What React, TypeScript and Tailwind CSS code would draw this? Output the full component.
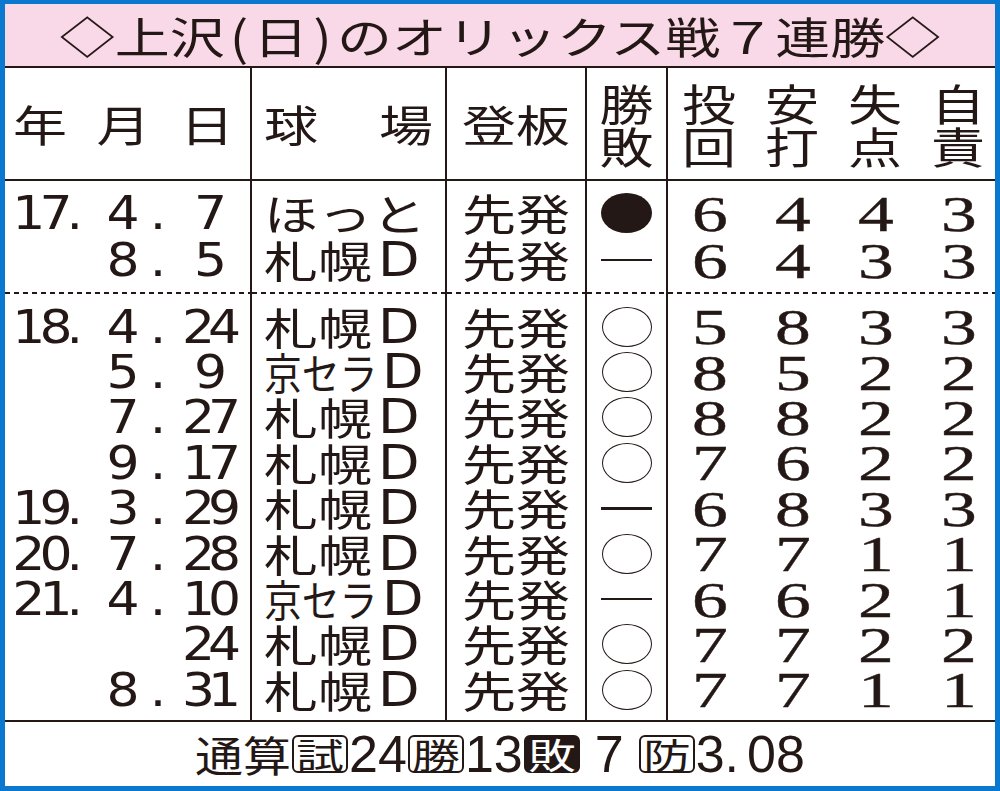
import React from "react";

type Result = "win" | "lose" | "none";
type Game = {
  y?: string;
  m?: string;
  d: string;
  park: string;
  res: Result;
  ip: string;
  h: string;
  r: string;
  er: string;
};

const season17: Game[] = [
  { y: "17.", m: "4", d: "7", park: "ほっと", res: "lose", ip: "6", h: "4", r: "4", er: "3" },
  { m: "8", d: "5", park: "札幌D", res: "none", ip: "6", h: "4", r: "3", er: "3" },
];

const later: Game[] = [
  { y: "18.", m: "4", d: "24", park: "札幌D", res: "win", ip: "5", h: "8", r: "3", er: "3" },
  { m: "5", d: "9", park: "京セラD", res: "win", ip: "8", h: "5", r: "2", er: "2" },
  { m: "7", d: "27", park: "札幌D", res: "win", ip: "8", h: "8", r: "2", er: "2" },
  { m: "9", d: "17", park: "札幌D", res: "win", ip: "7", h: "6", r: "2", er: "2" },
  { y: "19.", m: "3", d: "29", park: "札幌D", res: "none", ip: "6", h: "8", r: "3", er: "3" },
  { y: "20.", m: "7", d: "28", park: "札幌D", res: "win", ip: "7", h: "7", r: "1", er: "1" },
  { y: "21.", m: "4", d: "10", park: "京セラD", res: "none", ip: "6", h: "6", r: "2", er: "1" },
  { d: "24", park: "札幌D", res: "win", ip: "7", h: "7", r: "2", er: "2" },
  { m: "8", d: "31", park: "札幌D", res: "win", ip: "7", h: "7", r: "1", er: "1" },
];

const grid = "grid grid-cols-[245px_195px_140px_81px_329px] grid-rows-[100%]";
const line = "border-l-2 border-[#231815]";
const jp = "font-['Noto_Sans_CJK_JP',sans-serif]";
const sans = "font-['DejaVu_Sans',sans-serif]";
const serif = "font-['Liberation_Serif',serif]";
const footSans = "font-['Liberation_Sans',sans-serif]";

function Blank({ className }: { className: string }) {
  return (
    <div className={`${grid} ${className}`}>
      <div />
      <div className={line} />
      <div className={line} />
      <div className={line} />
      <div className={line} />
    </div>
  );
}

function Dashed() {
  const dash = "h-[2px] w-full bg-[repeating-linear-gradient(90deg,#231815_0_5px,transparent_5px_9px)]";
  return (
    <div className={`${grid} h-[2px]`}>
      <div className={dash} />
      <div className={`${line} ${dash}`} />
      <div className={`${line} ${dash}`} />
      <div className={`${line} ${dash}`} />
      <div className={`${line} ${dash}`} />
    </div>
  );
}

function Mark({ res }: { res: Result }) {
  if (res === "lose") return <div className="h-[40px] w-[51px] rounded-[50%] bg-[#231815]" />;
  if (res === "win") return <div className="h-[40px] w-[50px] rounded-[50%] border-[1.5px] border-[#231815]" />;
  return <div className="h-[2.5px] w-[51px] bg-[#231815]" />;
}

function Park({ name }: { name: string }) {
  const hasD = name.endsWith("D");
  const base = hasD ? name.slice(0, -1) : name;
  const condensed = base === "京セラ";
  return (
    <div className="flex items-center pl-[12px] leading-none">
      {condensed ? (
        <span className="inline-block w-[112px]">
          <span className={`inline-block origin-left scale-x-[0.7] scale-y-[0.8] whitespace-nowrap text-[54px] ${jp}`}>
            {base}
          </span>
        </span>
      ) : (
        <span className={`inline-block scale-y-[0.8] whitespace-nowrap text-[54px] ${jp}`}>{base}</span>
      )}
      {hasD && <span className={`ml-[6px] inline-block scale-y-[0.88] text-[54px] ${sans}`}>D</span>}
    </div>
  );
}

function GameRow({ g, h }: { g: Game; h: string }) {
  const stats = [g.ip, g.h, g.r, g.er];
  return (
    <div className={`${grid} ${h} leading-none`}>
      <div className={`flex items-center text-[52px] ${sans}`}>
        <span className="inline-block w-[72px] scale-y-[0.9] text-right tracking-[-6px]">{g.y}</span>
        <span className="ml-[23px] inline-block w-[46px] scale-y-[0.9] text-center">{g.m}</span>
        <span className="inline-block w-[24px] scale-y-[0.9] text-center">{g.m ? "." : ""}</span>
        <span className="ml-[12px] inline-block w-[50px] scale-y-[0.9] text-center tracking-[-7px]">{g.d}</span>
      </div>
      <div className={`${line} flex items-center`}>
        <Park name={g.park} />
      </div>
      <div className={`${line} flex items-center justify-center`}>
        <span className={`inline-block scale-y-[0.8] text-[54px] ${jp}`}>先発</span>
      </div>
      <div className={`${line} flex items-center justify-center`}>
        <Mark res={g.res} />
      </div>
      <div
        className={`${line} flex items-center gap-[43px] pl-[22px] text-[53px] ${serif} [-webkit-text-stroke:0.4px_#231815]`}
      >
        {stats.map((s, i) => (
          <span key={i} className="inline-block w-[40px] translate-y-[1px] scale-x-[1.35] scale-y-[0.95] text-center">
            {s}
          </span>
        ))}
      </div>
    </div>
  );
}

function Boxed({ ch, dark }: { ch: string; dark?: boolean }) {
  return (
    <span
      className={`mx-[1px] inline-flex h-[38px] w-[56px] items-center justify-center rounded-[6px] border-2 border-[#231815] text-[38px] leading-none ${jp} ${
        dark ? "bg-[#231815] text-white" : ""
      }`}
    >
      <span className="inline-block scale-x-[1.25] scale-y-[0.92]">{ch}</span>
    </span>
  );
}

export default function App() {
  const stackHead = [
    ["投", "回"],
    ["安", "打"],
    ["失", "点"],
    ["自", "責"],
  ];
  return (
    <div className="flex h-[791px] w-[1000px] flex-col border-x-[5px] border-t-4 border-b-[5px] border-[#0a78cf] bg-white text-[#231815]">
      <div className={`flex h-[62px] items-center justify-center bg-[#f9d9e7] text-[55px] leading-none ${jp}`}>
        <div className="flex scale-y-[0.78] items-center whitespace-nowrap">
          <span>◇上沢</span>
          <span className="mx-[5px] inline-block scale-y-[1.1]">(</span>
          <span>日</span>
          <span className="mx-[5px] inline-block scale-y-[1.1]">)</span>
          <span>のオリックス戦７連勝◇</span>
        </div>
      </div>
      <div className="h-[2px] bg-[#231815]" />

      <div className={`${grid} h-[111px] text-[54px] ${jp}`}>
        <div className="flex items-center justify-between pl-[8px] pr-[16px] leading-none">
          <span className="inline-block scale-y-[0.8]">年</span>
          <span className="inline-block scale-y-[0.8]">月</span>
          <span className="inline-block scale-y-[0.8]">日</span>
        </div>
        <div className={`${line} flex items-center justify-between pl-[12px] pr-[12px] leading-none`}>
          <span className="inline-block scale-y-[0.8]">球</span>
          <span className="inline-block scale-y-[0.8]">場</span>
        </div>
        <div className={`${line} flex items-center justify-center leading-none`}>
          <span className="inline-block scale-y-[0.8]">登板</span>
        </div>
        <div className={`${line} flex flex-col items-center justify-center leading-[43px]`}>
          <span className="inline-block scale-y-[0.8]">勝</span>
          <span className="inline-block scale-y-[0.8]">敗</span>
        </div>
        <div className={`${line} flex items-center gap-[29px] pl-[14px] leading-[43px]`}>
          {stackHead.map(([a, b]) => (
            <div key={a} className="flex w-[54px] flex-col items-center">
              <span className="inline-block scale-y-[0.8]">{a}</span>
              <span className="inline-block scale-y-[0.8]">{b}</span>
            </div>
          ))}
        </div>
      </div>
      <div className="h-[2px] bg-[#231815]" />

      <Blank className="h-[8.5px]" />
      {season17.map((g, i) => (
        <GameRow key={i} g={g} h="h-[47px]" />
      ))}
      <Blank className="h-[8.5px]" />
      <Dashed />
      <Blank className="h-[10px]" />
      {later.map((g, i) => (
        <GameRow key={i} g={g} h="h-[45.4px]" />
      ))}
      <Blank className="h-[7.4px]" />
      <div className="h-[2px] bg-[#231815]" />

      <div className="flex flex-1 items-center justify-center">
        <div className="flex items-center leading-none">
          <span className={`inline-block scale-y-[0.88] text-[48px] ${jp}`}>通算</span>
          <Boxed ch="試" />
          <span className={`${footSans} text-[52px]`}>24</span>
          <Boxed ch="勝" />
          <span className={`${footSans} text-[52px]`}>13</span>
          <Boxed ch="敗" dark />
          <span className={`mx-[14px] ${footSans} text-[52px]`}>7</span>
          <Boxed ch="防" />
          <span className={`${footSans} text-[52px]`}>3.</span>
          <span className={`ml-[8px] ${footSans} text-[52px]`}>08</span>
        </div>
      </div>
    </div>
  );
}
